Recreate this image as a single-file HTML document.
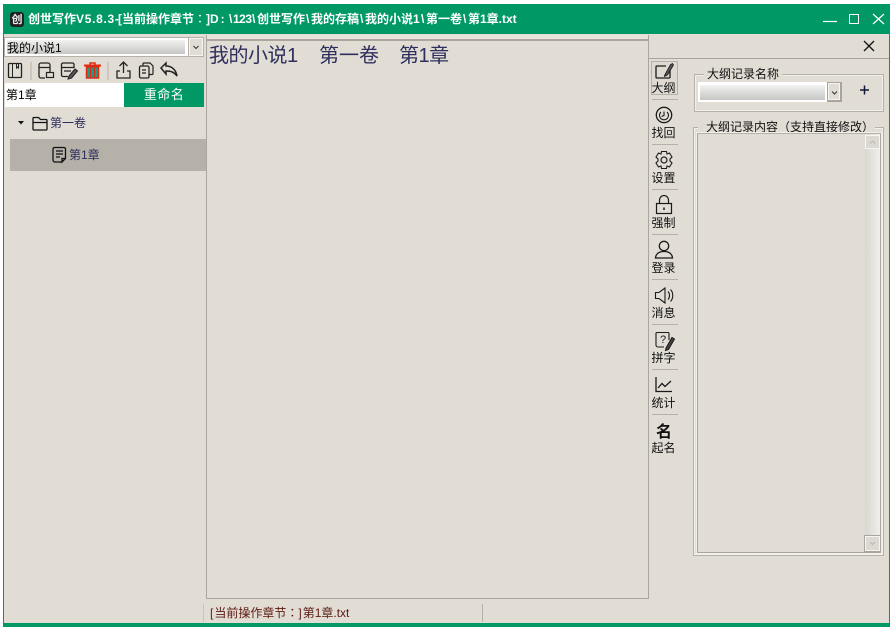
<!DOCTYPE html>
<html>
<head>
<meta charset="utf-8">
<style>
html,body{margin:0;padding:0;background:#fff;width:893px;height:630px;overflow:hidden}
body{font-family:"Liberation Sans","WenQuanYi Zen Hei","Noto Sans CJK SC",sans-serif;font-size:12px;color:#000}
.a{position:absolute;box-sizing:border-box}
.t{position:absolute;white-space:nowrap;line-height:14px}
.tt{position:absolute;top:12px;white-space:nowrap;line-height:14px;color:#fff;font-weight:bold;font-size:12px}
svg{position:absolute;overflow:visible;fill:none;stroke:#1a1a1a;stroke-width:1.2}
.sep{position:absolute;left:652px;width:26px;height:1px;background:#b5b1a9}
.lbl{position:absolute;left:650px;width:27px;text-align:center;font-size:12px;line-height:14px;color:#111;white-space:nowrap}
.grad{background:linear-gradient(#f2f2f0,#c6c6c5)}
.c{font-family:"Noto Sans CJK TC",sans-serif;display:inline-block;width:12px;text-align:center;font-weight:normal}
</style>
</head>
<body>
<div class="a" style="left:3px;top:4px;width:887px;height:623px;background:#e1ddd5"></div>
<div class="a" style="left:3px;top:4px;width:1px;height:623px;background:#009966"></div>
<div class="a" style="left:889px;top:4px;width:1px;height:623px;background:#009966"></div>
<div class="a" style="left:3px;top:4px;width:887px;height:30px;background:#009966"></div>
<div class="a" style="left:3px;top:623px;width:887px;height:4px;background:#009966"></div>

<!-- title -->
<div class="a" style="left:10px;top:12px;width:14px;height:15px;background:#222;border-radius:3px"></div>
<div class="t" style="left:10px;top:13px;width:14px;text-align:center;color:#eee;font-size:11px;font-weight:bold">创</div>
<div class="tt" style="left:28px">创世写作</div>
<div class="tt" style="left:76px;letter-spacing:.7px">V5.8.3-</div>
<div class="tt" style="left:118px">[</div>
<div class="tt" style="left:122px">当前操作章节</div>
<div class="tt c" style="left:194px">：</div>
<div class="tt" style="left:206px">]</div>
<div class="tt" style="left:210px;letter-spacing:2px">D:</div>
<div class="tt" style="left:229px">\</div>
<div class="tt" style="left:233px;letter-spacing:-.5px">123</div>
<div class="tt" style="left:252px">\</div>
<div class="tt" style="left:257px">创世写作</div>
<div class="tt" style="left:306px">\</div>
<div class="tt" style="left:311px">我的存稿</div>
<div class="tt" style="left:360px">\</div>
<div class="tt" style="left:365px">我的小说1</div>
<div class="tt" style="left:421px">\</div>
<div class="tt" style="left:426px">第一卷</div>
<div class="tt" style="left:463px">\</div>
<div class="tt" style="left:468px">第1章.txt</div>
<svg style="left:0;top:0" width="893" height="60">
<path d="M823 21.500H837" stroke="#fff" stroke-width="1.200"/>
<rect x="849.500" y="14.500" width="9" height="9" stroke="#fff" stroke-width="1"/>
<path d="M873 14L884 24M884 14L873 24" stroke="#fff" stroke-width="1.200"/>
<path d="M864 41L874 51M874 41L864 51" stroke="#111" stroke-width="1.300"/>
</svg>

<!-- left combo -->
<div class="a" style="left:4px;top:37px;width:200px;height:20px;background:#b5b1a9"></div>
<div class="a" style="left:5px;top:38px;width:183px;height:18px;background:#fff"></div>
<div class="a grad" style="left:7px;top:40px;width:178px;height:14px"></div>
<div class="t" style="left:7px;top:41px;font-size:12px">我的小说1</div>
<div class="a" style="left:189px;top:38px;width:14px;height:18px;background:#e1ddd5;border:1px solid #f6f5f2"></div>
<svg style="left:0;top:0" width="220" height="60"><path d="M193.500 46L196 48.500L198.500 46" stroke="#333" stroke-width="1"/></svg>

<!-- toolbar -->
<svg style="left:0;top:0" width="200" height="90">
<g stroke="#222">
<rect x="8.500" y="63.500" width="13" height="14" rx="1" stroke-width="1.300"/><path d="M12.500 63.500V77.500M16.500 64V68l1-1 1 1V64" stroke-width="1"/>
<path d="M31 62V80" stroke="#bdb9b1"/>
<path d="M50 72V65a2 2 0 0 0-2-2H41a2 2 0 0 0-2 2V76a2 2 0 0 0 2 2H45M39 67.500H50" stroke-width="1.300"/>
<rect x="46.500" y="72.500" width="7" height="5" stroke-width="1.200"/>
<path d="M74 68V64.500a1.500 1.500 0 0 0-1.500-1.500H63a1.500 1.500 0 0 0-1.500 1.500V75a1.500 1.500 0 0 0 1.500 1.500H68M62 67.500H74M64 71H71" stroke-width="1.300"/>
<path d="M69 76L75 69L77.500 71L71.500 78L68 79Z" fill="#555" stroke-width="1"/>
<path d="M108 62V80" stroke="#bdb9b1"/>
<path d="M120 71H117V78H130V71H127M123.500 73V62M119.500 66L123.500 62L127.500 66" stroke-width="1.300"/>
<rect x="139.500" y="66" width="9.500" height="12" rx="1.500" stroke-width="1.300"/><path d="M143 66V64a1 1 0 0 1 1-1H150L153 66V73.500a1 1 0 0 1-1 1H149M142 70H146M142 73H146" stroke-width="1.200"/>
<path d="M161 68L166 63V66C172 66 176 70 177 76C174 72 171 71 166 71V74Z" stroke-width="1.500"/>
</g>
<path d="M84 65.500H101" stroke="#e02a10" stroke-width="2"/>
<path d="M90 65V63H95V65" stroke="#e02a10" stroke-width="1.500"/>
<rect x="86.500" y="67" width="12" height="11" fill="#1d9d88" stroke="#e02a10" stroke-width="1.500"/>
<path d="M90.500 68V77M94.500 68V77" stroke="#e02a10" stroke-width="1.500"/>
</svg>

<!-- rename -->
<div class="a" style="left:5px;top:83px;width:119px;height:24px;background:#fff"></div>
<div class="t" style="left:6px;top:88px;font-size:12px">第1章</div>
<div class="a" style="left:124px;top:83px;width:80px;height:24px;background:#009966"></div>
<div class="t" style="left:124px;top:88px;width:80px;text-align:center;color:#fff;font-size:13px;letter-spacing:.5px">重命名</div>

<!-- tree -->
<div class="a" style="left:10px;top:139px;width:196px;height:32px;background:#b5b1a8"></div>
<svg style="left:0;top:0" width="206" height="172">
<path d="M18 121H24L21 124.500Z" fill="#111" stroke="none"/>
<path d="M33 129V118.500a1 1 0 0 1 1-1H38.500L40.500 119.500H46a1 1 0 0 1 1 1V129a1 1 0 0 1-1 1H34a1 1 0 0 1-1-1ZM33 122.500H47" stroke="#111" stroke-width="1.300"/>
<path d="M62 162H55a2 2 0 0 1-2-2V149a1.500 1.500 0 0 1 1.500-1.500H64a1.500 1.500 0 0 1 1.500 1.500V158.500L62 162V158.500H65.500" stroke="#111" stroke-width="1.300"/>
<path d="M56 151H63M56 154H63M56 157H60" stroke="#111" stroke-width="1.300"/>
</svg>
<div class="t" style="left:50px;top:116px;color:#2c2c5a;font-size:12px">第一卷</div>
<div class="t" style="left:69px;top:148px;color:#2c2c5a;font-size:12px">第1章</div>

<!-- center -->
<div class="a" style="left:206px;top:35px;width:443px;height:564px;border:1px solid #aaa69e;border-top:0"></div>
<div class="a" style="left:207px;top:35px;width:441px;height:4px;background:#e8e5df"></div>
<div class="a" style="left:206px;top:39px;width:443px;height:2px;background:#aaa69e"></div>
<div class="t" style="left:209px;top:45px;font-size:20px;line-height:22px;color:#2f2f5e;letter-spacing:-.5px">我的小说<span style="letter-spacing:-2px">1</span></div>
<div class="t" style="left:319px;top:45px;font-size:20px;line-height:22px;color:#2f2f5e">第一卷</div>
<div class="t" style="left:399px;top:45px;font-size:20px;line-height:22px;color:#2f2f5e;letter-spacing:-.5px">第1章</div>

<!-- status -->
<div class="a" style="left:203px;top:604px;width:1px;height:18px;background:#c9c5bd"></div>
<div class="a" style="left:482px;top:604px;width:1px;height:18px;background:#b5b1a9"></div>
<div class="t" style="left:210px;top:606px;color:#5a1a10;font-size:12px"><span style="letter-spacing:1px">[</span>当前操作章节<span class="c">：</span><span style="letter-spacing:1px">]</span>第1章.txt</div>

<!-- right top line -->
<div class="a" style="left:648px;top:58px;width:241px;height:1px;background:#aaa69e"></div>

<!-- side buttons -->
<div class="a" style="left:651px;top:61px;width:27px;height:34px;border:1px solid #b5b1a9;background:#dedad2"></div>
<div class="sep" style="top:99px"></div>
<div class="sep" style="top:144px"></div>
<div class="sep" style="top:189px"></div>
<div class="sep" style="top:234px"></div>
<div class="sep" style="top:279px"></div>
<div class="sep" style="top:324px"></div>
<div class="sep" style="top:369px"></div>
<div class="sep" style="top:414px"></div>
<div class="lbl" style="top:81px">大纲</div>
<div class="lbl" style="top:126px">找回</div>
<div class="lbl" style="top:171px">设置</div>
<div class="lbl" style="top:216px">强制</div>
<div class="lbl" style="top:261px">登录</div>
<div class="lbl" style="top:306px">消息</div>
<div class="lbl" style="top:351px">拼字</div>
<div class="lbl" style="top:396px">统计</div>
<div class="lbl" style="top:441px">起名</div>
<svg style="left:0;top:0" width="700" height="460">
<path d="M666 66H657a1 1 0 0 0-1 1V77a1 1 0 0 0 1 1H669a1 1 0 0 0 1-1V70" stroke-width="1.300"/>
<path d="M664.500 75.500L670.500 64.500L672.500 63.500L673.500 65L667.500 75L664.500 76.500Z" fill="#555" stroke-width=".8"/>
<circle cx="664" cy="115" r="7.700" stroke-width="1.300"/><path d="M661 112A4.500 4.500 0 1 0 667 112M664 111.500V115.500L661.500 116.500" stroke-width="1.100"/>
<circle cx="664" cy="160" r="3" stroke-width="1.200"/>
<path d="M661.500 151.500H666.500L667 154L669.500 153L672 157L670 159V161L672 163L669.500 167L667 166L666.500 168.500H661.500L661 166L658.500 167L656 163L658 161V159L656 157L658.500 153L661 154Z" stroke-width="1.100"/>
<rect x="656.500" y="203.500" width="15" height="10" stroke-width="1.200"/><path d="M659.500 203V200a4.500 4.500 0 0 1 9 0V203" stroke-width="1.200"/><path d="M664 207.500V210" stroke-width="1.500"/>
<circle cx="664" cy="246" r="4.700" stroke-width="1.300"/><path d="M655.500 258C656 253 660 251.500 664 251.500S672 253 672.500 258Z" stroke-width="1.300"/>
<path d="M655.500 292.500V298.500H659L665 303V288L659 292.500ZM668 291.500C670 293.500 670 297.500 668 299.500M670.500 289.500C673.500 292.500 673.500 298.500 670.500 301.500" stroke-width="1.100"/>
<path d="M669 340V333.500a1 1 0 0 0-1-1H657a1 1 0 0 0-1 1V345a2 2 0 0 0 2 2H664" stroke-width="1.100"/>
<path d="M666 348L672 337.500L674.500 339L668.500 349.500L665.500 350.500Z" fill="#444" stroke-width="1"/>
<path d="M656 377V391.500H672M658 388L662 383.500L665 386.500L671 381" stroke-width="1.300"/>
</svg>
<div class="t" style="left:660px;top:334px;font-size:11px;line-height:12px;color:#222">?</div>
<div class="t" style="left:655px;top:421px;width:18px;text-align:center;font-size:16px;line-height:18px;font-weight:bold;color:#111;font-family:'Noto Sans CJK SC',sans-serif">名</div>

<!-- group 1 -->
<div class="a" style="left:694px;top:74px;width:190px;height:38px;border:1px solid #b5b1a9;box-shadow:inset 0 0 0 1px #f1efea"></div>
<div class="a" style="left:704px;top:67px;width:78px;height:14px;background:#e1ddd5"></div>
<div class="t" style="left:707px;top:67px;font-size:12px;color:#111">大纲记录名称</div>
<div class="a" style="left:698px;top:82px;width:129px;height:20px;background:#fff"></div>
<div class="a grad" style="left:700px;top:85px;width:125px;height:15px"></div>
<div class="a" style="left:827px;top:82px;width:15px;height:20px;background:#aaa59c"></div>
<div class="a" style="left:828px;top:83px;width:12px;height:17px;background:#e1ddd5;border:1px solid #f6f5f2"></div>
<svg style="left:0;top:0" width="893" height="110"><path d="M832 91.500L834.500 94L837 91.500" stroke="#333" stroke-width="1"/><path d="M860 90H869M864.500 85.500V94.500" stroke="#10183a" stroke-width="1.500"/></svg>

<!-- group 2 -->
<div class="a" style="left:693px;top:127px;width:191px;height:429px;border:1px solid #b5b1a9;box-shadow:inset 0 0 0 1px #f1efea"></div>
<div class="a" style="left:698px;top:120px;width:177px;height:13px;background:#e1ddd5"></div>
<div class="t" style="left:706px;top:120px;font-size:12px;color:#111">大纲记录内容（支持直接修改）</div>
<div class="a" style="left:697px;top:133px;width:184px;height:420px;border:1px solid #aaa69e;border-top:1px solid #b5b1a9;outline:1px solid #f1efea"></div>
<div class="a" style="left:865px;top:134px;width:15px;height:418px;background:linear-gradient(90deg,#d9d7d0,#f0efeb)"></div>
<div class="a" style="left:865px;top:135px;width:15px;height:14px;background:#dcd9d2;border:1px solid #f6f5f2"></div>
<div class="a" style="left:865px;top:536px;width:15px;height:15px;background:#dcd9d2;border:1px solid #f6f5f2;outline:1px solid #aaa69e"></div>
<svg style="left:0;top:0" width="893" height="560"><path d="M870 143.500L872.500 141L875 143.500M870 542L872.500 544.500L875 542" stroke="#b9b6af" stroke-width="1"/></svg>
</body>
</html>
